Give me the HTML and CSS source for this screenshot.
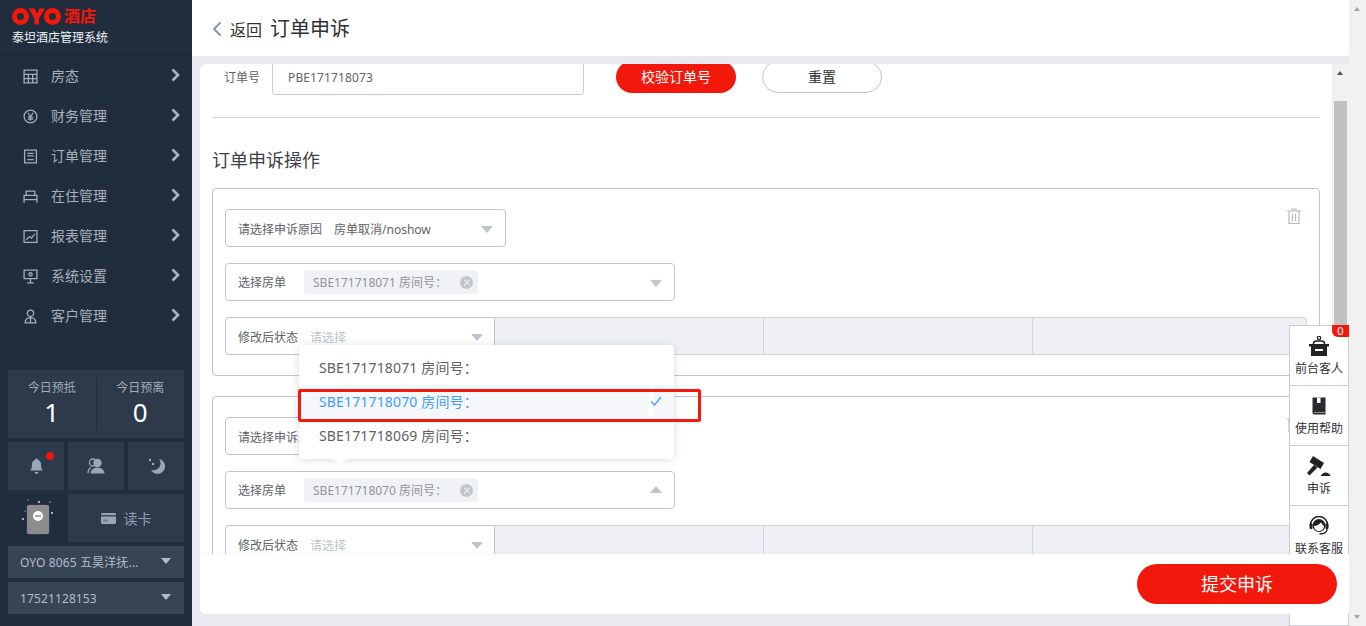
FILE: index.html
```html
<!DOCTYPE html>
<html lang="zh">
<head>
<meta charset="utf-8">
<title>订单申诉</title>
<link rel="stylesheet" href="styles.css">
</head>
<body>
<div class="app">
  <aside class="sidebar">
    <div class="brand">
      <div class="logo">
        <svg class="logo-mark" viewBox="0 0 49 17" width="49" height="17" aria-label="OYO">
          <circle cx="8.5" cy="8.5" r="6" fill="none" stroke="#f2180b" stroke-width="5"/>
          <polygon points="16.5,0.5 22.5,0.5 25,5.5 27.5,0.5 33,0.5 27,10.5 27,16.5 22.5,16.5 22.5,10.5" fill="#f2180b"/>
          <circle cx="40.5" cy="8.5" r="6" fill="none" stroke="#f2180b" stroke-width="5"/>
        </svg>
        <span class="logo-text">酒店</span>
      </div>
      <div class="brand-sub">泰坦酒店管理系统</div>
    </div>
    <nav class="menu">
      <a class="menu-item"><svg class="mi" viewBox="0 0 14 14"><path d="M1 1h12v12H1zM1 5h12M1 9h12M5 5v8M9 5v8"/></svg><span>房态</span><svg class="chev" viewBox="0 0 9 14"><path d="M1.5 1.5 7 7l-5.500 5.500"/></svg></a>
      <a class="menu-item"><svg class="mi" viewBox="0 0 14 14"><circle cx="7" cy="7" r="6"/><path d="M4.500 3.500 7 7l2.500-3.500M7 7v4M4.500 7.500h5M4.500 9.500h5"/></svg><span>财务管理</span><svg class="chev" viewBox="0 0 9 14"><path d="M1.5 1.5 7 7l-5.500 5.500"/></svg></a>
      <a class="menu-item"><svg class="mi" viewBox="0 0 14 14"><path d="M1.500 1h11v12h-11zM4 4h6M4 6.500h6M4 10h6"/></svg><span>订单管理</span><svg class="chev" viewBox="0 0 9 14"><path d="M1.5 1.5 7 7l-5.500 5.500"/></svg></a>
      <a class="menu-item"><svg class="mi" viewBox="0 0 14 14"><path d="M3 6V2h8v4M1 13V6h12v7M1 10h12"/></svg><span>在住管理</span><svg class="chev" viewBox="0 0 9 14"><path d="M1.5 1.5 7 7l-5.500 5.500"/></svg></a>
      <a class="menu-item"><svg class="mi" viewBox="0 0 14 14"><path d="M1 1.500h12v11H1zM3 10l3-3 2 1.500L11 4.500"/></svg><span>报表管理</span><svg class="chev" viewBox="0 0 9 14"><path d="M1.5 1.5 7 7l-5.500 5.500"/></svg></a>
      <a class="menu-item"><svg class="mi" viewBox="0 0 14 14"><path d="M1 1h12v8H1zM7 9v4M4 13h6"/><circle cx="7" cy="5" r="1.500"/></svg><span>系统设置</span><svg class="chev" viewBox="0 0 9 14"><path d="M1.5 1.5 7 7l-5.500 5.500"/></svg></a>
      <a class="menu-item"><svg class="mi" viewBox="0 0 14 14"><circle cx="7" cy="4" r="3"/><path d="M2 13c0-3 1.500-5 5-5s5 2 5 5zM7 8v5"/></svg><span>客户管理</span><svg class="chev" viewBox="0 0 9 14"><path d="M1.5 1.5 7 7l-5.500 5.500"/></svg></a>
    </nav>
    <div class="side-bottom">
      <div class="stats">
        <div class="stat"><div class="stat-label">今日预抵</div><div class="stat-num">1</div></div>
        <div class="stat"><div class="stat-label">今日预离</div><div class="stat-num">0</div></div>
      </div>
      <div class="tools">
        <div class="tool tool-bell">
          <svg class="tool-icon" viewBox="2.500 1 11 14" width="15" height="16"><path d="M8 1.500c-.8 0-1.200.5-1.200 1.100C4.800 3.200 4 5 4 7c0 2.500-.5 3.800-1.500 5h11c-1-1.200-1.500-2.500-1.500-5 0-2-.8-3.800-2.800-4.400C9.200 2 8.800 1.500 8 1.500zM6.500 13.200h3C9.400 14.200 8.800 15 8 15s-1.400-.8-1.500-1.800z"/></svg>
          <i class="dot"></i>
        </div>
        <div class="tool">
          <svg class="tool-icon" viewBox="0 0 18 16" width="18" height="16"><circle cx="6" cy="4.500" r="3.500" fill="none" stroke="#9aa5b8" stroke-width="1.300"/><path d="M1 15c.1-2.500 1-4.500 3-5.500" fill="none" stroke="#9aa5b8" stroke-width="1.300"/><circle cx="10.500" cy="5" r="4.200"/><path d="M3.500 15.500c.3-3.800 3-5.800 7-5.800s6.700 2 7 5.800z"/></svg>
        </div>
        <div class="tool">
          <svg class="tool-icon" viewBox="0 0 18 16" width="18" height="16"><path d="M12 1A7.500 7.500 0 1 1 4 12C8 13 12 11 13 8 14 5.500 13.500 3 12 1z"/><circle cx="3" cy="2" r="1.200"/><circle cx="6" cy="6" r="1.200"/></svg>
        </div>
      </div>
      <div class="tools tools-card">
        <div class="device">
          <svg viewBox="0 0 40 46" width="40" height="46">
            <g fill="#d9dde3"><circle cx="12" cy="5" r=".6"/><circle cx="23" cy="7" r="1"/><circle cx="34" cy="7" r=".7"/><circle cx="9" cy="16" r=".6"/><circle cx="7" cy="24" r="1"/><circle cx="36" cy="18" r="1"/></g>
            <rect x="10.500" y="9.500" width="23" height="30" rx="3" fill="#5d666f" opacity=".5"/>
            <rect x="11" y="10" width="22" height="29" rx="2" fill="#8c8c8e"/>
            <circle cx="22" cy="21" r="5" fill="#fff"/>
            <rect x="19" y="20" width="6" height="2" fill="#a5a5a5"/>
          </svg>
        </div>
        <div class="tool tool-read">
          <svg viewBox="0 0 15 11" width="15" height="11"><rect width="15" height="11" rx="1.500" fill="#9aa5b8"/><rect y="2" width="15" height="1.500" fill="#3a4759"/><rect x="2" y="6.500" width="5" height="2" fill="#75818f"/></svg>
          <span>读卡</span>
        </div>
      </div>
      <div class="pick"><span class="pick-text">OYO 8065 五昊洋抚...</span><i class="tri-d"></i></div>
      <div class="pick"><span class="pick-text">17521128153</span><i class="tri-d"></i></div>
    </div>
  </aside>

  <main class="main">
    <header class="topbar">
      <svg class="back" viewBox="0 0 10 16" width="10" height="16"><path d="M8.500 1.500 2 8l6.500 6.500"/></svg>
      <span class="back-text">返回</span>
      <h1 class="page-title">订单申诉</h1>
    </header>
    <section class="card">
      <div class="card-body">
        <div class="scroll">
          <div class="order-row">
            <label class="order-label">订单号</label>
            <div class="order-input">PBE171718073</div>
            <button class="btn btn-red">校验订单号</button>
            <button class="btn btn-plain">重置</button>
          </div>
          <hr class="divider">
          <h2 class="section-title">订单申诉操作</h2>

          <div class="box">
            <svg class="trash" viewBox="0 0 14 16" width="14" height="16"><path d="M0 3h14M5 3V1h4v2M2 3v12.500h10V3M5.500 6v7M8.500 6v7"/></svg>
            <div class="sel sel-reason"><span class="sel-label">请选择申诉原因</span><span class="sel-value">房单取消/noshow</span><i class="tri tri-down"></i></div>
            <div class="sel sel-room"><span class="sel-label sel-label-room">选择房单</span><span class="tag">SBE171718071 房间号：<i class="tag-x"></i></span><i class="tri tri-down"></i></div>
            <div class="status-row">
              <div class="status-sel"><span class="sel-label">修改后状态</span><span class="placeholder">请选择</span><i class="tri tri-down"></i></div>
              <div class="cell cell-a"></div><div class="cell cell-b"></div><div class="cell"></div>
            </div>
          </div>

          <div class="box">
            <svg class="trash" viewBox="0 0 14 16" width="14" height="16"><path d="M0 3h14M5 3V1h4v2M2 3v12.500h10V3M5.500 6v7M8.500 6v7"/></svg>
            <div class="sel sel-reason"><span class="sel-label">请选择申诉原因</span><span class="sel-value">房单取消/noshow</span><i class="tri tri-down"></i></div>
            <div class="sel sel-room"><span class="sel-label sel-label-room">选择房单</span><span class="tag">SBE171718070 房间号：<i class="tag-x"></i></span><i class="tri tri-up"></i></div>
            <div class="status-row">
              <div class="status-sel"><span class="sel-label">修改后状态</span><span class="placeholder">请选择</span><i class="tri tri-down"></i></div>
              <div class="cell cell-a"></div><div class="cell cell-b"></div><div class="cell"></div>
            </div>
          </div>

          <div class="dropdown">
            <div class="opt">SBE171718071 房间号：</div>
            <div class="opt opt-on">SBE171718070 房间号：
              <i class="opt-gap"></i>
              <svg class="opt-check" viewBox="0 0 12 10" width="12" height="10"><path d="M1 5.500 4.500 9 11 1"/></svg>
            </div>
            <div class="opt">SBE171718069 房间号：</div>
            <i class="dropdown-arrow"></i>
          </div>
          <div class="annotation"></div>
        </div>
        <div class="bar-inner">
          <i class="sb-up sb-up-dark"></i>
          <div class="thumb"></div>
        </div>
      </div>
      <footer class="card-foot"><button class="submit">提交申诉</button></footer>
    </section>
  </main>

  <div class="bar-outer"><i class="sb-up"></i><i class="sb-down"></i></div>

  <div class="float-panel">
    <div class="float-item">
      <span class="badge">0</span>
      <svg viewBox="0 0 20 20" width="20" height="20"><circle cx="10" cy="2" r="1.700" fill="none" stroke="#222" stroke-width="1.200"/><path d="M4.500 8V7.500C4.500 6 6 5 7.500 5h5C14 5 15.500 6 15.500 7.500V8" fill="none" stroke="#222" stroke-width="1.500"/><path d="M0 8h20v2.500h-2V20H2v-9.500H0z" fill="#222"/><rect x="6" y="13" width="8" height="2" fill="#fff"/></svg>
      <span>前台客人</span>
    </div>
    <div class="float-item">
      <svg viewBox="0 0 20 20" width="20" height="20"><path d="M3.500 1.500h13v17h-11a2 2 0 0 1-2-2z" fill="#2a2a2e"/><rect x="8" y="1.500" width="3.500" height="5.500" fill="#fff"/><path d="M5 16.500h11.500" stroke="#b08a55" stroke-width="1"/></svg>
      <span>使用帮助</span>
    </div>
    <div class="float-item">
      <svg viewBox="0 0 24 20" width="24" height="20"><path d="M6 0 17 7 13.500 13 2.500 6z" fill="#222"/><path d="M7 9 10.500 11.500 2.500 19.500 0 17z" fill="#222"/><path d="M13.700 20h10c-1-2-3-3.500-5-3.500s-4 1.500-5 3.500z" fill="#222"/></svg>
      <span>申诉</span>
    </div>
    <div class="float-item">
      <svg viewBox="0 0 20 20" width="20" height="20"><path d="M1.500 9A8.500 8.500 0 0 1 18.500 9" fill="none" stroke="#222" stroke-width="1.600"/><circle cx="10" cy="9.500" r="6.500" fill="#222"/><path d="M5 10C7 10 10 9 12 6.500 13 8 14 9.500 15 10 15 13 12.500 15 10 15S5 13 5 10z" fill="#fff"/><rect x="0.500" y="7.500" width="3" height="5.500" rx="1" fill="#222"/><rect x="16.500" y="7.500" width="3" height="5.500" rx="1" fill="#222"/><path d="M18 13c0 3.500-3 5-7.500 5" fill="none" stroke="#222" stroke-width="1.400"/></svg>
      <span>联系客服</span>
    </div>
  </div>
</div>
</body>
</html>
```

FILE: styles.css
```css
* { box-sizing: border-box; }
html, body { margin: 0; height: 100%; overflow: hidden; }
body { font-family: "Noto Sans", "Noto Sans CJK SC", sans-serif; font-size: 12px; color: #303133; background: #e9e9ef; }

.app { position: relative; display: flex; height: 626px; width: 1366px; overflow: hidden; }

/* sidebar */
.sidebar { width: 192px; flex: none; background: #1f2d3d; display: flex; flex-direction: column; }
.brand { height: 55px; padding: 7px 0 0 12px; border-bottom: 1px solid #1a2633; }
.logo { display: flex; align-items: center; height: 19px; gap: 3px; }
.logo-text { color: #f2180b; font-size: 16px; font-weight: 700; line-height: 19px; }
.brand-sub { color: #f0f2f5; font-size: 12px; line-height: 16px; margin-top: 4px; }
.menu { display: flex; flex-direction: column; margin-top: 1px; }
.menu-item { display: flex; align-items: center; height: 40px; padding-left: 23px; color: #a8b0bc; font-size: 14px; }
.menu-item span { margin-left: 13px; flex: 1; padding-bottom: 2px; }
.mi { width: 15px; height: 15px; fill: none; stroke: #a3adbd; stroke-width: 1.200; }
.chev { width: 9px; height: 14px; margin-right: 12px; margin-top: -2px; fill: none; stroke: #a8b3c4; stroke-width: 2.600; }

.side-bottom { margin-top: auto; padding: 0 8px 12px; display: flex; flex-direction: column; gap: 4px; }
.stats { height: 68px; background: #2c3a4b; display: flex; align-items: center; }
.stat { flex: 1; height: 52px; text-align: center; padding-top: 2px; }
.stat:first-child { border-right: 1px solid #1f2d3d; }
.stat-label { color: #a0aab8; font-size: 12px; line-height: 16px; }
.stat-num { color: #fff; font-size: 26px; line-height: 32px; }
.tools { display: grid; grid-template-columns: repeat(3, 56px); gap: 4px; height: 48px; }
.tools-card { grid-template-columns: 56px 116px; }
.tool { position: relative; background: #2c3a4b; display: flex; align-items: center; justify-content: center; }
.tool-icon { fill: #9aa5b8; }
.dot { position: absolute; top: 10px; left: 38px; width: 8px; height: 8px; border-radius: 50%; background: #f5140c; }
.device { display: flex; align-items: center; justify-content: center; }
.tool-read { gap: 8px; color: #939eae; font-size: 14px; }
.pick { height: 32px; background: #374454; display: flex; align-items: center; justify-content: space-between; padding: 0 12px; color: #b3bcc9; font-size: 12px; letter-spacing: .12px; }
.tri-d { width: 0; height: 0; border-left: 5.500px solid transparent; border-right: 5.500px solid transparent; border-top: 6px solid #b3bcc9; margin-top: -2px; margin-right: 1px; }

/* main */
.main { width: 1157px; flex: none; display: flex; flex-direction: column; }
.topbar { height: 56px; background: #fff; display: flex; align-items: center; padding: 2px 0 0 20px; flex: none; }
.back { fill: none; stroke: #8b95a5; stroke-width: 2; }
.back-text { margin-left: 8px; font-size: 16px; color: #303133; }
.page-title { margin: 0 0 0 8px; font-size: 20px; font-weight: 400; color: #303133; line-height: 28px; }

.card { margin: 8px 0 12px 8px; flex: 1; min-height: 0; background: #fff; border-radius: 6px 0 0 6px; display: flex; flex-direction: column; position: relative; overflow: hidden; }
.card-body { flex: 1; min-height: 0; display: flex; }
.scroll { position: relative; flex: 1; min-width: 0; padding: 0 12px; overflow: hidden; }
.order-row { display: flex; align-items: center; height: 36px; margin-top: -5px; }
.order-label { width: 60px; padding-left: 12px; color: #606266; font-size: 12px; }
.order-input { width: 312px; height: 36px; border: 1px solid #c8cbd3; border-radius: 4px; display: flex; align-items: center; padding-left: 15px; color: #606266; font-size: 12px; letter-spacing: .12px; }
.btn { height: 32px; width: 120px; border-radius: 16px; font: inherit; font-size: 14px; padding: 0 0 2px; }
.btn-red { margin-left: 32px; background: #f2180b; border: 0; color: #fff; }
.btn-plain { margin-left: 26px; background: #fff; border: 1px solid #c0c4cc; color: #303133; }
.divider { border: 0; border-top: 1px solid #d4d7de; margin: 22px 0 0; width: 1108px; }
.section-title { margin: 0; font-size: 18px; font-weight: 400; line-height: 26px; padding-top: 29px; height: 70px; color: #3c3f44; }

.box { position: relative; width: 1108px; border: 1px solid #c0c4cc; border-radius: 4px; padding: 20px 12px; margin-bottom: 20px; display: flex; flex-direction: column; gap: 16px; }
.trash { position: absolute; right: 18px; top: 19px; fill: none; stroke: #b4b9c2; stroke-width: 1.200; }
.sel { height: 38px; border: 1px solid #c0c4cc; border-radius: 4px; display: flex; align-items: center; padding: 2px 12px 0; position: relative; }
.sel-reason { width: 281px; }
.sel-room { width: 450px; padding-top: 0; }
.sel-label { color: #606266; font-size: 12px; white-space: nowrap; }
.sel-label-room { width: 66px; }
.sel-value { margin-left: 12px; color: #606266; font-size: 12px; white-space: nowrap; }
.tri { margin-left: auto; width: 0; height: 0; border-left: 6.500px solid transparent; border-right: 6.500px solid transparent; flex: none; }
.tri-down { border-top: 7px solid #c0c4cc; }
.sel-room .tri-down { margin-top: 2px; }
.tri-up { border-bottom: 7px solid #c0c4cc; margin-top: -2px; }
.tag { display: inline-flex; align-items: center; height: 24px; width: 174px; padding-left: 9px; background: #f0f2f5; border-radius: 4px; color: #909399; font-size: 12px; white-space: nowrap; position: relative; }
.tag-x { position: absolute; right: 5px; top: 6px; width: 13px; height: 13px; border-radius: 50%; background: #c0c4cc; }
.tag-x::before, .tag-x::after { content: ""; position: absolute; left: 2.500px; top: 6px; width: 8px; height: 1.300px; background: #f0f2f5; transform: rotate(45deg); }
.tag-x::after { transform: rotate(-45deg); }
.status-row { display: grid; grid-template-columns: 270px 269px 269px 274px; height: 38px; }
.status-sel { border: 1px solid #c0c4cc; border-radius: 4px 0 0 4px; display: flex; align-items: center; padding: 2px 11px 0 12px; }
.placeholder { margin-left: 12px; color: #c0c4cc; font-size: 12px; }
.cell { background: #eff0f5; border: 1px solid #d3d5dc; border-left: 0; }
.cell:last-child { border-radius: 0 4px 4px 0; }

.dropdown { position: absolute; left: 99px; top: 281px; width: 375px; height: 114px; padding: 6px 0; background: #fff; border-radius: 4px; box-shadow: 0 1px 8px rgba(0,0,0,.14); z-index: 2; }
.dropdown-arrow { position: absolute; left: 35px; bottom: -6px; width: 0; height: 0; border-left: 6px solid transparent; border-right: 6px solid transparent; border-top: 6px solid #fff; }
.opt { position: relative; height: 34px; line-height: 34px; padding-left: 20px; font-size: 14px; color: #606266; white-space: nowrap; letter-spacing: .15px; }
.opt-on { color: #409eff; background: #f5f7fa; margin-left: 4px; padding-left: 16px; }
.opt-gap { position: absolute; left: 346px; top: 0; width: 4px; height: 100%; background: #fff; }
.opt-check { position: absolute; left: 347px; top: 11px; fill: none; stroke: #409eff; stroke-width: 1.300; }
.annotation { position: absolute; left: 98px; top: 325px; width: 403px; height: 33px; border: 3px solid #f5180f; border-radius: 2px; z-index: 3; }

/* scrollbars */
.bar-inner { width: 17px; flex: none; background: #f1f1f1; position: relative; }
.thumb { position: absolute; left: 2px; top: 37px; width: 13px; height: 240px; background: #c1c1c1; }
.sb-up, .sb-down { position: absolute; left: 5px; width: 0; height: 0; border-left: 3.500px solid transparent; border-right: 3.500px solid transparent; }
.sb-up { top: 7px; border-bottom: 4px solid #a3a3a3; }
.sb-up-dark { border-bottom-color: #505050; top: 7px; }
.sb-down { bottom: 7px; border-top: 4px solid #a3a3a3; }
.bar-outer { width: 17px; flex: none; background: #f1f1f1; position: relative; }

.card-foot { height: 60px; flex: none; background: #fff; display: flex; align-items: center; justify-content: flex-end; padding-right: 12px; position: relative; z-index: 5; box-shadow: 0 -1px 2px rgba(0,0,0,.03); }
.submit { width: 200px; height: 40px; border: 0; border-radius: 20px; background: #f2180b; color: #fff; font: inherit; font-size: 18px; padding: 0 0 2px; }

/* floating panel */
.float-panel { position: absolute; top: 325px; right: 17px; bottom: 0; width: 60px; background: #fff; border: 1px solid #c9ccd3; z-index: 1; }
.float-item { position: relative; height: 60px; border-bottom: 1px solid #c9ccd3; display: flex; flex-direction: column; align-items: center; padding-top: 10px; gap: 4px; font-size: 12px; color: #303133; line-height: 17px; white-space: nowrap; }
.float-item svg { flex: none; }
.badge { position: absolute; top: -1px; right: -1px; width: 17px; height: 12px; background: #f2180b; color: #fff; font-size: 11px; line-height: 12px; text-align: center; border-radius: 0 0 0 6px; }
```
